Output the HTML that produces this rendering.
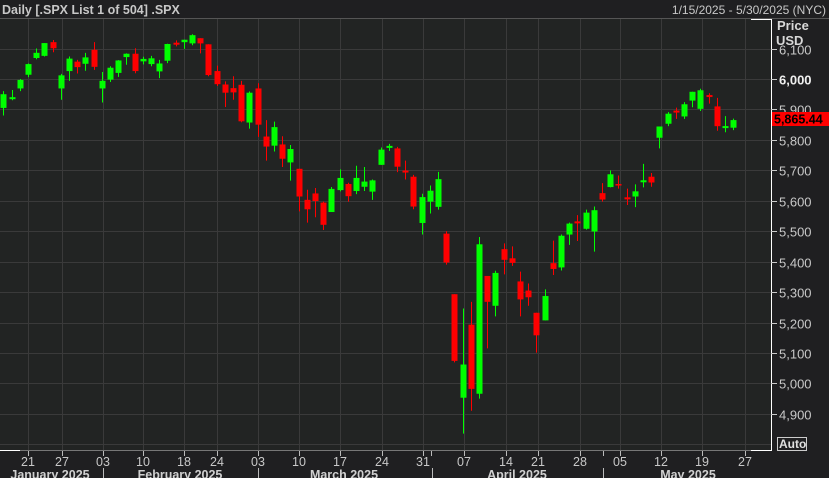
<!DOCTYPE html>
<html><head><meta charset="utf-8"><style>
html,body{margin:0;padding:0;background:#1f1f21;width:829px;height:478px;overflow:hidden;font-family:"Liberation Sans",sans-serif}
svg{display:block}
</style></head><body>
<svg id="c" width="829" height="478" xmlns="http://www.w3.org/2000/svg">
<rect x="0" y="0" width="829" height="478" fill="#1f1f21"/>
<rect x="0" y="19" width="771" height="431" fill="#222423"/>
<line x1="0" y1="18.5" x2="829" y2="18.5" stroke="#555" stroke-width="1"/>
<text x="2" y="14" fill="#c8c8c8" font-size="12.5" font-weight="bold">Daily [.SPX List 1 of 504] .SPX</text>
<text x="826" y="14" fill="#c8c8c8" font-size="12" text-anchor="end">1/15/2025 - 5/30/2025 (NYC)</text>
<g id="grid"></g>
<g id="candles"></g>
<line x1="771.5" y1="19" x2="771.5" y2="451" stroke="#fff" stroke-width="1"/>
<line x1="751" y1="19.5" x2="771" y2="19.5" stroke="#fff"/>
<line x1="0" y1="450.5" x2="771" y2="450.5" stroke="#777"/>
<line x1="751" y1="450.5" x2="771" y2="450.5" stroke="#fff"/>
<line x1="0" y1="450.5" x2="20" y2="450.5" stroke="#fff"/>
<text x="777" y="30" fill="#d8d8d8" font-size="13" font-weight="bold">Price</text>
<text x="776" y="45" fill="#d8d8d8" font-size="13" font-weight="bold">USD</text>
<g id="axis"></g>
<rect x="772" y="112" width="57" height="14" fill="#ff0000"/>
<text x="774" y="123.5" fill="#000" font-size="12.5" font-weight="bold">5,865.44</text>
<rect x="777.5" y="437.5" width="29" height="13" fill="none" stroke="#ccc"/>
<text x="779" y="448" fill="#e0e0e0" font-size="12" font-weight="bold">Auto</text>
<g id="xaxis"></g>
</svg>
<script>
var NS="http://www.w3.org/2000/svg";
function el(p,t,a,txt){var e=document.createElementNS(NS,t);for(var k in a)e.setAttribute(k,a[k]);if(txt)e.textContent=txt;p.appendChild(e);return e;}
function Y(p){return 79+(6000-p)*0.3044;}
var g=document.getElementById('grid'),ax=document.getElementById('axis'),xa=document.getElementById('xaxis'),cg=document.getElementById('candles');
for(var p=4800;p<=6100;p+=100){var y=Math.round(Y(p))+0.5;el(g,'line',{x1:0,y1:y,x2:771,y2:y,stroke:'#3a3a3a'});
 if(p>=4900){el(ax,'line',{x1:771,y1:y,x2:777,y2:y,stroke:'#ccc'});
 var s=(p/1000|0)+','+String(p%1000).padStart(3,'0');
 el(ax,'text',{x:779,y:y+5,fill:p==6000?'#f0f0f0':'#c8c8c8','font-size':'13','font-weight':p==6000?'bold':'normal'},s);}}
var vx=[[28,'21'],[62,'27'],[103,'03'],[143,'10'],[184,'18'],[217,'24'],[258,'03'],[299,'10'],[340,'17'],[382,'24'],[423,'31'],[464,'07'],[506,'14'],[538,'21'],[580,'28'],[620,'05'],[661,'12'],[702,'19'],[745,'27']];
vx.forEach(function(v){el(g,'line',{x1:v[0]+.5,y1:19,x2:v[0]+.5,y2:450,stroke:'#3a3a3a'});
 el(xa,'line',{x1:v[0]+.5,y1:451,x2:v[0]+.5,y2:456,stroke:'#bbb'});
 el(xa,'text',{x:v[0],y:466,fill:'#c8c8c8','font-size':'12.5','text-anchor':'middle'},v[1]);});
el(xa,'line',{x1:431.5,y1:451,x2:431.5,y2:456,stroke:'#bbb'});el(xa,'line',{x1:603.5,y1:451,x2:603.5,y2:456,stroke:'#bbb'});
[103,258,432,603].forEach(function(x){el(xa,'line',{x1:x+.5,y1:468,x2:x+.5,y2:478,stroke:'#bbb'});});
[[50,'January 2025'],[180,'February 2025'],[344,'March 2025'],[517,'April 2025'],[688,'May 2025']].forEach(function(m){
 el(xa,'text',{x:m[0],y:479,fill:'#d0d0d0','font-size':'12.5','font-weight':'bold','text-anchor':'middle'},m[1]);});
var D=[[5905,5960,5880,5950],[5937,5964,5930,5937],[5969,6000,5960,5997],[6014,6051,6006,6049],[6069,6100,6065,6086],[6076,6118,6074,6118],[6121,6128,6088,6101],
[5969,6017,5932,6012],[6026,6074,5994,6067],[6057,6063,6018,6039],[6050,6086,6027,6071],[6096,6121,6030,6040],
[5969,6023,5923,5994],[5998,6042,5990,6037],[6020,6062,6007,6061],[6072,6084,6047,6083],[6083,6101,6019,6026],
[6058,6073,6048,6066],[6049,6076,6042,6068],[6025,6063,6003,6051],[6060,6116,6052,6115],[6116,6127,6107,6114],
[6121,6129,6099,6129],[6117,6147,6111,6144],[6134,6134,6084,6117],[6114,6114,6009,6013],
[6026,6044,5977,5983],[5982,5992,5908,5955],[5970,6009,5932,5956],[5981,5994,5858,5861],[5857,5959,5837,5955],
[5969,5986,5810,5850],[5811,5865,5732,5778],[5781,5860,5762,5842],[5785,5812,5711,5738],[5726,5783,5666,5770],
[5705,5705,5565,5614],[5603,5636,5528,5572],[5624,5642,5546,5599],[5594,5597,5504,5521],[5563,5645,5563,5639],
[5635,5703,5631,5675],[5655,5659,5597,5615],[5632,5715,5622,5675],[5646,5711,5632,5663],[5630,5670,5603,5667],
[5718,5775,5718,5768],[5775,5787,5764,5777],[5772,5777,5694,5712],[5696,5732,5670,5693],[5679,5685,5572,5581],
[5527,5623,5489,5612],[5597,5650,5558,5633],[5580,5695,5571,5671],[5492,5500,5390,5397],[5293,5293,5069,5074],
[4953,5246,4835,5062],[5193,5268,4910,4982],[4966,5481,4950,5457],[5353,5353,5115,5268],[5255,5370,5220,5363],
[5441,5460,5358,5406],[5411,5450,5386,5396],[5335,5367,5220,5276],[5305,5328,5255,5283],
[5232,5232,5101,5158],[5207,5309,5207,5287],[5395,5469,5356,5376],[5381,5489,5371,5485],[5489,5528,5455,5525],
[5529,5553,5468,5528],[5508,5571,5505,5561],[5499,5581,5433,5569],[5625,5658,5597,5604],[5645,5700,5644,5687],
[5655,5683,5640,5650],[5608,5640,5586,5607],[5614,5654,5579,5631],[5663,5721,5644,5664],[5679,5691,5646,5660],
[5807,5844,5772,5844],[5853,5891,5845,5886],[5893,5906,5869,5892],[5877,5924,5869,5917],[5929,5958,5907,5958],
[5902,5968,5895,5963],[5944,5953,5919,5940],[5910,5938,5830,5845],[5841,5878,5825,5842],[5840,5870,5832,5865]];
D.forEach(function(d,i){var x=Math.round(3.4+8.2*i);var up=d[3]>=d[0];var c=up?'#00ff00':'#ff0000';
 el(cg,'line',{x1:x+.5,y1:Y(d[1]),x2:x+.5,y2:Y(d[2]),stroke:c});
 var t=Y(Math.max(d[0],d[3])),b=Y(Math.min(d[0],d[3]));if(b-t<1.5){t-=1;b=t+2;}
 el(cg,'rect',{x:x-2.5,y:t,width:6,height:b-t,fill:c});});
</script>
</body></html>
